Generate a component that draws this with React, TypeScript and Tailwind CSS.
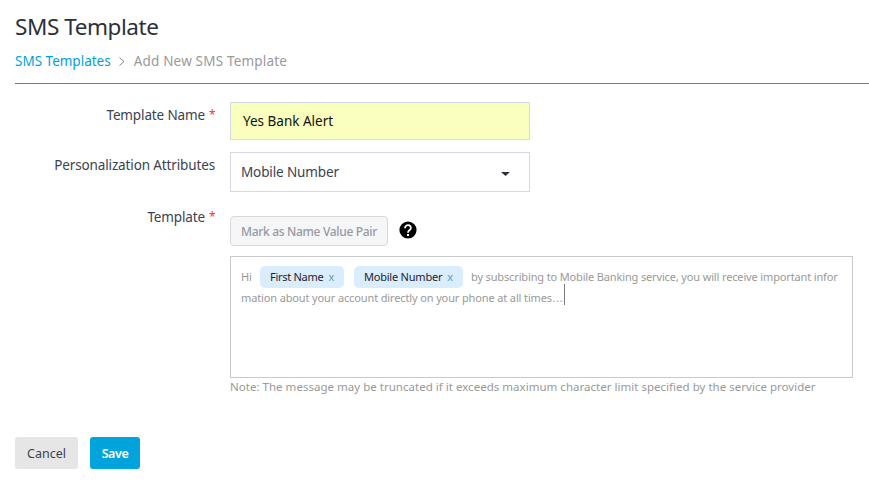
import type { ReactNode } from "react";

function Chip({ children, className }: { children: ReactNode; className: string }) {
  return (
    <span className={`inline-flex h-[22px] shrink-0 items-center rounded-[5px] bg-[#daedfe] pl-2.5 text-[11px] text-[#1c242c] ${className}`}>
      <span>{children}</span>
      <span className="ml-[5px] text-[#5b9cc4]">x</span>
    </span>
  );
}

function Label({ text, required }: { text: string; required?: boolean }) {
  return (
    <label className="flex w-[200px] shrink-0 justify-end text-[13.5px] leading-[18px] tracking-[-0.13px] text-[#3b4250]">
      {text}
      {required && <span className="ml-1 w-1.5 text-[12px] tracking-normal text-[#f5333f]">*</span>}
    </label>
  );
}

export default function App() {
  return (
    <main className="h-[487px] w-[869px] overflow-hidden whitespace-nowrap bg-white pl-[15px] font-['Noto_Sans',sans-serif]">
      <h1 className="pt-3 text-[22.5px] leading-[30px] tracking-[-0.44px] text-[#2b303b]">SMS Template</h1>
      <nav className="mt-[10px] flex h-[18px] items-center text-[13.5px] leading-[18px]">
        <a className="text-[#00a1d9]">SMS Templates</a>
        <svg className="ml-2 h-[9px] w-[6px]" viewBox="0 0 6 9" fill="none" stroke="#858585">
          <path d="M.5 .5 5 4.5.5 8.5" />
        </svg>
        <span className="ml-[9px] tracking-[0.18px] text-[#999]">Add New SMS Template</span>
      </nav>
      <div className="mt-[13px] h-px bg-[#1a9dba]" />

      <div className="mt-[18px] flex h-[38px] gap-[15px]">
        <div className="pt-1"><Label text="Template Name" required /></div>
        <div className="flex w-[300px] items-center border border-[#d3dae3] bg-[#faffbd] px-3 text-[13.5px] text-[#111]">Yes Bank Alert</div>
      </div>

      <div className="mt-3 flex h-10 gap-[15px]">
        <div className="pt-1"><Label text="Personalization Attributes" /></div>
        <div className="flex w-[300px] items-center justify-between border border-[#d3dae3] pl-2.5 pr-[19px] text-[13.5px] tracking-[-0.13px] text-[#3b4250]">
          <span className="mt-px">Mobile Number</span>
          <svg className="mt-[3px] h-1 w-[9px]" viewBox="0 0 9 4"><path d="M0 0h9L4.500 4Z" fill="#2b303b" /></svg>
        </div>
      </div>

      <div className="mt-[15px] flex gap-[15px]">
        <div className="pt-px"><Label text="Template" required /></div>
        <div>
          <div className="mt-[9px] flex items-start">
            <button className="h-[30px] w-[158px] rounded-[4px] border border-[#d9d9db] bg-[#f5f6f8] pt-0.5 text-[12px] font-medium tracking-[-0.33px] text-[#9599a2]">Mark as Name Value Pair</button>
            <svg className="ml-[11px] mt-[5px] h-[18px] w-[18px]" viewBox="0 0 18 18">
              <circle cx="9" cy="9" r="8.600" fill="#000" />
              <path d="M6.100 7.200V6.800a2.900 2.700 0 1 1 4.600 2.200C9.700 9.800 9 10.100 9 11.700" fill="none" stroke="#fff" strokeWidth="1.800" />
              <path d="M8 13h2v1.900H8z" fill="#fff" />
            </svg>
          </div>
          <div className="mt-[10px] h-[122px] w-[623px] border border-[#c7c9ca] px-2.5 pt-[9px] text-[11px] tracking-[-0.13px] text-[#999]">
            <div className="flex h-[22px] items-center">
              <span className="w-[19px] shrink-0">Hi</span>
              <Chip className="w-[84px] tracking-[-0.28px]">First Name</Chip>
              <Chip className="ml-2.5 w-[109px] tracking-[-0.22px]">Mobile Number</Chip>
              <span className="ml-2 tracking-[-0.145px]">by subscribing to Mobile Banking service, you will receive important infor</span>
            </div>
            <div className="mt-[-4px] flex h-[21px] items-start">
              <span className="mt-1 leading-[16px]">mation about your account directly on your phone at all times<span className="text-[15px] font-light">…</span></span>
              <span className="ml-px h-[21px] w-px bg-[#777f88]" />
            </div>
          </div>
          <p className="text-[11.5px] leading-[18px] tracking-[0.022px] text-[#999]">Note: The message may be truncated if it exceeds maximum character limit specified by the service provider</p>
        </div>
      </div>

      <footer className="mt-[41px] flex gap-3">
        <button className="h-8 w-[63px] rounded-[3px] bg-[#e6e6e6] pt-0.5 text-[12.5px] text-[#3b4250]">Cancel</button>
        <button className="h-8 w-[50px] rounded-[3px] bg-[#00a3dc] pt-0.5 text-[12.5px] font-semibold tracking-[-0.4px] text-white">Save</button>
      </footer>
    </main>
  );
}
